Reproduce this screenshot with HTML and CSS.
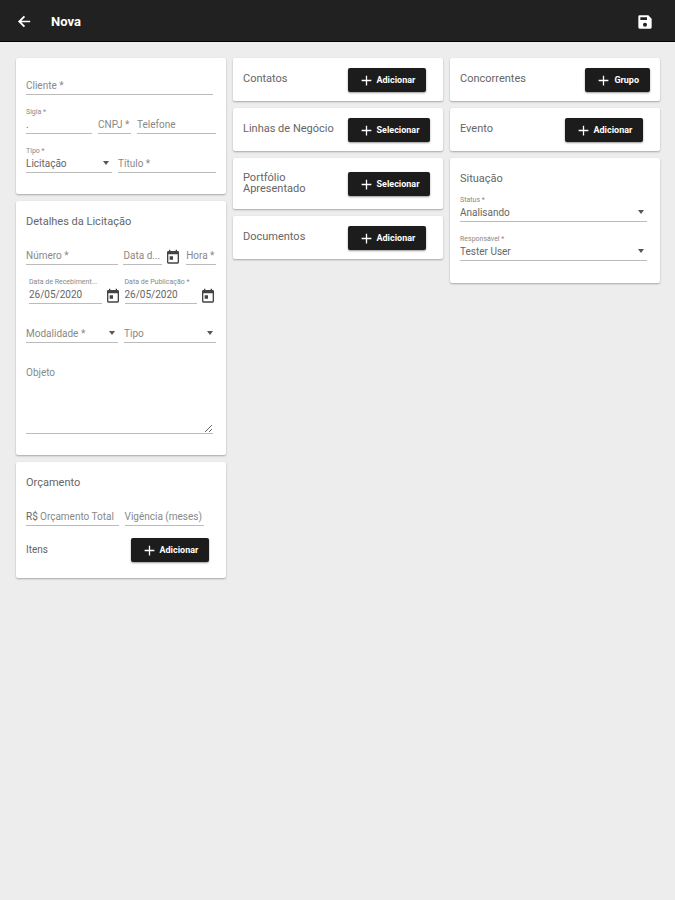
FILE: index.html
```html
<!DOCTYPE html>
<html lang="pt-BR">
<head>
  <meta charset="UTF-8">
  <title>Nova</title>
  <meta name="viewport" content="width=device-width, initial-scale=1.0">
  <link rel="stylesheet" href="styles.css">
</head>
<body>

  <svg class="sprite" aria-hidden="true">
    <symbol id="plus" viewBox="0 0 24 24"><path d="M21 13.2h-7.8V21h-2.4v-7.8H3v-2.4h7.8V3h2.4v7.8H21z"/></symbol>
    <symbol id="event" viewBox="0 0 24 24"><path d="M19 3h-1V1h-2v2H8V1H6v2H5a2 2 0 0 0-2 2v15a2 2 0 0 0 2 2h14a2 2 0 0 0 2-2V5a2 2 0 0 0-2-2zm0 17H5V8h14v12zM7 11h5v5H7z"/></symbol>
  </svg>

  <header class="toolbar">
    <button class="icon-button" type="button" aria-label="Voltar">
      <svg viewBox="0 0 24 24"><path d="M20 10.8H7.6l5.2-5.2L11 3.8 2.8 12l8.2 8.2 1.8-1.8-5.2-5.2H20z"/></svg>
    </button>
    <h1>Nova</h1>
    <button class="icon-button save" type="button" aria-label="Salvar">
      <svg viewBox="0 0 24 24"><path fill-rule="evenodd" d="M17 2H4a2 2 0 0 0-2 2v16a2 2 0 0 0 2 2h16a2 2 0 0 0 2-2V7zM12 19a3 3 0 1 1 0-6 3 3 0 0 1 0 6zM15 9H5V5h10z"/></svg>
    </button>
  </header>

  <main class="board">
    <div class="column">
      <section class="card">
        <div class="fields">
          <div class="field empty inset"><label for="cliente">Cliente *</label><input id="cliente" type="text"></div>
          <div class="row row-contact">
            <div class="field"><label for="sigla">Sigla *</label><input id="sigla" type="text" value="."></div>
            <div class="field empty"><label for="cnpj">CNPJ *</label><input id="cnpj" type="text"></div>
            <div class="field empty"><label for="telefone">Telefone</label><input id="telefone" type="tel"></div>
          </div>
          <div class="row row-title">
            <div class="field select"><label for="tipo">Tipo *</label><select id="tipo"><option>Licitação</option></select></div>
            <div class="field empty"><label for="titulo">Título *</label><input id="titulo" type="text"></div>
          </div>
        </div>
      </section>

      <section class="card">
        <h2>Detalhes da Licitação</h2>
        <div class="fields">
          <div class="row row-number">
            <div class="field empty"><label for="numero">Número *</label><input id="numero" type="text"></div>
            <div class="date">
              <div class="field empty"><label for="data">Data d...</label><input id="data" type="text"></div>
              <button class="picker" type="button" aria-label="Abrir calendário"><svg><use href="#event"/></svg></button>
            </div>
            <div class="field empty"><label for="hora">Hora *</label><input id="hora" type="text"></div>
          </div>
          <div class="row row-dates">
            <div class="date">
              <div class="field"><label for="recebimento">Data de Recebiment...</label><input id="recebimento" type="text" value="26/05/2020"></div>
              <button class="picker" type="button" aria-label="Abrir calendário"><svg><use href="#event"/></svg></button>
            </div>
            <div class="date">
              <div class="field"><label for="publicacao">Data de Publicação *</label><input id="publicacao" type="text" value="26/05/2020"></div>
              <button class="picker" type="button" aria-label="Abrir calendário"><svg><use href="#event"/></svg></button>
            </div>
          </div>
          <div class="row row-half">
            <div class="field select empty"><label for="modalidade">Modalidade *</label><select id="modalidade"><option></option></select></div>
            <div class="field select empty"><label for="tipoLicitacao">Tipo</label><select id="tipoLicitacao"><option></option></select></div>
          </div>
          <div class="field empty inset"><label for="objeto">Objeto</label><textarea id="objeto"></textarea></div>
        </div>
      </section>

      <section class="card card-budget">
        <h2>Orçamento</h2>
        <div class="row row-budget">
          <div class="field empty money"><span>R$</span><label for="total">Orçamento Total</label><input id="total" type="text"></div>
          <div class="field empty"><label for="vigencia">Vigência (meses)</label><input id="vigencia" type="text"></div>
        </div>
        <div class="action items">
          <h3>Itens</h3>
          <button class="button" type="button"><svg><use href="#plus"/></svg>Adicionar</button>
        </div>
      </section>
    </div>

    <div class="column">
      <section class="card action">
        <h2>Contatos</h2>
        <button class="button" type="button"><svg><use href="#plus"/></svg>Adicionar</button>
      </section>
      <section class="card action">
        <h2>Linhas de Negócio</h2>
        <button class="button" type="button"><svg><use href="#plus"/></svg>Selecionar</button>
      </section>
      <section class="card action tall">
        <h2>Portfólio Apresentado</h2>
        <button class="button" type="button"><svg><use href="#plus"/></svg>Selecionar</button>
      </section>
      <section class="card action">
        <h2>Documentos</h2>
        <button class="button" type="button"><svg><use href="#plus"/></svg>Adicionar</button>
      </section>
    </div>

    <div class="column">
      <section class="card action wide">
        <h2>Concorrentes</h2>
        <button class="button" type="button"><svg><use href="#plus"/></svg>Grupo</button>
      </section>
      <section class="card action">
        <h2>Evento</h2>
        <button class="button" type="button"><svg><use href="#plus"/></svg>Adicionar</button>
      </section>
      <section class="card card-status">
        <h2>Situação</h2>
        <div class="fields">
          <div class="field select inset"><label for="status">Status *</label><select id="status"><option>Analisando</option></select></div>
          <div class="field select inset"><label for="responsavel">Responsável *</label><select id="responsavel"><option>Tester User</option></select></div>
        </div>
      </section>
    </div>
  </main>

</body>
</html>
```
FILE: styles.css
```css
* {
  box-sizing: border-box;
}
body {
  margin: 0;
  min-height: 100vh;
  background: #ededed;
  color: #666;
  font-family: Roboto, "Liberation Sans", sans-serif;
  font-size: 10px;
}
button, input, select, textarea {
  margin: 0;
  padding: 0;
  border: 0;
  border-radius: 0;
  background: none;
  color: inherit;
  font: inherit;
}
button {
  cursor: pointer;
}
svg {
  display: block;
  fill: currentColor;
}
.sprite {
  display: none;
}

/* toolbar */
.toolbar {
  display: flex;
  align-items: center;
  height: 42px;
  padding: 2px 22px 0 16px;
  background: #212121;
  border-bottom: 1px solid #000;
  color: #fff;
}
.toolbar h1 {
  margin: 0 0 0 18px;
  font-size: 13px;
  font-weight: 700;
}
.icon-button svg {
  width: 17px;
  height: 17px;
}
.save {
  margin-left: auto;
}
.save svg {
  width: 16px;
  height: 16px;
}

/* cards */
.board {
  display: grid;
  grid-template-columns: repeat(3, minmax(0, 1fr));
  gap: 7px;
  align-items: start;
  padding: 16px 15px 16px 16px;
}
.column {
  display: flex;
  flex-direction: column;
  gap: 7px;
}
.card {
  padding: 10px 10px 21px;
  background: #fff;
  border-radius: 2px;
  box-shadow: 0 1px 2px rgba(0,0,0,0.3);
}
h2, h3 {
  margin: 0;
  font-weight: 400;
}
h2 {
  margin-bottom: 5px;
  font-size: 11px;
  line-height: 22px;
}
h3 {
  padding-bottom: 2px;
  font-size: 10px;
}
.card-budget {
  padding-bottom: 16px;
}
.card-status {
  padding-bottom: 22px;
}

/* title with a button beside it */
.action {
  display: grid;
  grid-template-columns: 55% auto;
  align-items: center;
  justify-content: start;
}
.action.wide {
  grid-template-columns: 66% auto;
}
.card.action {
  padding-bottom: 9px;
}
.action h2 {
  margin: 0 0 3px;
  line-height: 11px;
}
.card.tall {
  min-height: 51px;
}
.items {
  margin-top: 12px;
}
.button {
  display: flex;
  align-items: center;
  gap: 4px;
  height: 24px;
  padding: 0 11px 0 12px;
  background: #1c1c1c;
  border-radius: 2px;
  box-shadow: 0 1px 2px rgba(0,0,0,0.4);
  color: #fff;
  font-size: 9px;
  font-weight: 700;
}
.button svg {
  width: 13px;
  height: 13px;
}

/* fields */
.fields {
  display: flex;
  flex-direction: column;
  gap: 12px;
}
.row {
  display: grid;
  gap: 6px;
}
.row-contact {
  grid-template-columns: 66fr 33fr 79fr;
}
.row-title {
  grid-template-columns: 86fr 98fr;
}
.row-number {
  grid-template-columns: 93fr 58fr 30fr;
  gap: 5px;
}
.row-dates {
  grid-template-columns: 1fr 1fr;
  gap: 4px;
  padding-left: 3px;
}
.row-half {
  grid-template-columns: 1fr 1fr;
}
.row-budget {
  grid-template-columns: 92fr 79fr;
  padding-right: 12px;
}
.inset {
  margin-right: 3px;
}
.field {
  display: grid;
  grid-template-columns: minmax(0, 1fr);
  grid-template-rows: 8px auto;
  min-width: 0;
  border-bottom: 1px solid #bbb;
}
.field label {
  color: #888;
  font-size: 7px;
  line-height: 10px;
  white-space: nowrap;
}
.field input, .field select {
  width: 100%;
  height: 18px;
  padding-top: 1px;
  appearance: none;
  outline: 0;
}
.field textarea {
  width: 100%;
  height: 70px;
  outline: 0;
  resize: vertical;
}
.field.empty > * {
  grid-row: 2;
  grid-column: 1;
}
.field.empty label {
  height: 18px;
  font-size: 10px;
  line-height: 20px;
  pointer-events: none;
}
.field.money {
  grid-template-columns: 14px minmax(0, 1fr);
}
.field.money span {
  height: 18px;
  line-height: 20px;
}
.field.money label, .field.money input {
  grid-column: 2;
}
.select::after {
  content: "";
  grid-row: 2;
  grid-column: 1;
  align-self: center;
  justify-self: end;
  margin-right: 3px;
  border: 3px solid transparent;
  border-top: 4px solid #555;
  border-bottom: 0;
  pointer-events: none;
}
.select select {
  grid-row: 2;
  grid-column: 1;
}
.date {
  display: grid;
  grid-template-columns: minmax(0, 1fr) 16px;
  gap: 3px;
  align-items: end;
}
.picker svg {
  width: 16px;
  height: 16px;
}
.picker {
  color: #444;
}
```
